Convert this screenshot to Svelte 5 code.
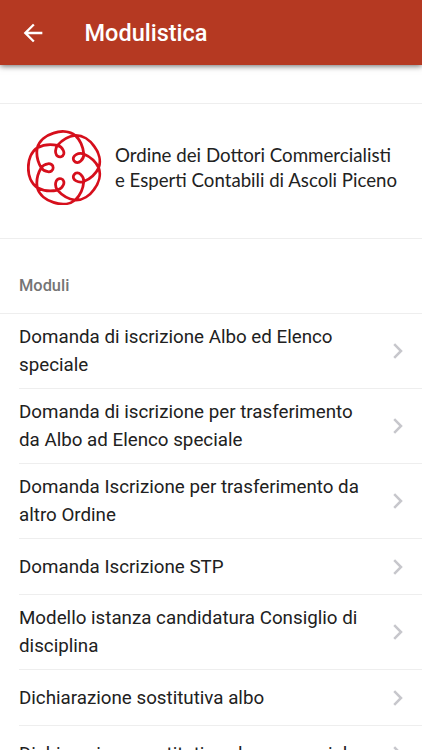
<script lang="ts">
  type Point = [number, number];

  const modules = [
    "Domanda di iscrizione Albo ed Elenco speciale",
    "Domanda di iscrizione per trasferimento da Albo ad Elenco speciale",
    "Domanda Iscrizione per trasferimento da altro Ordine",
    "Domanda Iscrizione STP",
    "Modello istanza candidatura Consiglio di disciplina",
    "Dichiarazione sostitutiva albo",
    "Dichiarazione sostitutiva elenco speciale",
  ];

  // Half a petal of the rosette: tip of the inner loop, the crossing,
  // the outer node and the top of the arc, with their bezier handles.
  const half: Point[] = [
    [35, 0],
    [35, -9], [43, -13], [51, -12],
    [60, -11], [67, -6], [71, 0],
    [80, 15], [87, 38], [83, 60],
    [77, 82], [56, 98], [34, 104.6],
  ];

  function place([x, y]: Point, deg: number, side: number): string {
    const a = (deg * Math.PI) / 180;
    const px = x * Math.cos(a) + side * y * Math.sin(a);
    const py = x * Math.sin(a) - side * y * Math.cos(a);
    return `${px.toFixed(1)} ${py.toFixed(1)}`;
  }

  function rosette(): string {
    let d = `M${place(half[0], 180, 1)}`;
    for (let i = 0; i < 5; i++) {
      const from = 180 - i * 144;
      const out = half.slice(1).map((p) => place(p, from, 1));
      const back = half.slice(0, -1).reverse().map((p) => place(p, from - 144, -1));
      d += ` C${[...out, ...back].join(" ")}`;
    }
    return d + "Z";
  }
</script>

<svelte:head><title>Modulistica</title></svelte:head>

<main>
  <header class="navbar">
    <button class="back" aria-label="Indietro">
      <svg viewBox="0 0 24 24" aria-hidden="true">
        <path d="M20 11H7.83l5.59-5.59L12 4l-8 8 8 8 1.41-1.41L7.83 13H20v-2z" />
      </svg>
    </button>
    <h1>Modulistica</h1>
  </header>

  <section class="brand">
    <svg class="emblem" viewBox="-114 -114 228 228" aria-hidden="true">
      <path d={rosette()} />
    </svg>
    <svg class="name" viewBox="0 0 290 60">
      <text x="0" y="23" textLength="276" lengthAdjust="spacingAndGlyphs">Ordine dei Dottori Commercialisti</text>
      <text x="0" y="47.5" textLength="282" lengthAdjust="spacingAndGlyphs">e Esperti Contabili di Ascoli Piceno</text>
    </svg>
  </section>

  <h2>Moduli</h2>
  <ul>
    {#each modules as title (title)}
      <li>
        <div class="row">
          <span class="title">{title}</span>
          <svg class="chevron" viewBox="0 0 10 16" aria-hidden="true">
            <path d="M1.2 1.2 8 8l-6.8 6.8" />
          </svg>
        </div>
      </li>
    {/each}
  </ul>
</main>

<style>
  :global(body) {
    background: #fff;
    overflow: hidden;
  }
  main {
    height: 750px;
    overflow: hidden;
    font-family: Roboto, "Liberation Sans", sans-serif;
    color: #212121;
  }
  .navbar {
    display: flex;
    align-items: center;
    height: 65px;
    background: #b53922;
    box-shadow: 0 1px 6px rgba(0, 0, 0, 0.6);
    color: #fff;
  }
  .back {
    display: flex;
    margin: 0;
    padding: 0 0 0 19px;
    border: 0;
    background: none;
  }
  .back svg {
    width: 28px;
    height: 28px;
    fill: #fff;
  }
  h1 {
    margin: 0 0 0 37.5px;
    font-size: 23.5px;
    font-weight: 500;
    line-height: 28px;
  }
  .brand {
    display: flex;
    align-items: center;
    box-sizing: border-box;
    height: 136px;
    margin-top: 38px;
    padding-left: 26.5px;
    border-top: 1px solid #eee;
    border-bottom: 1px solid #eee;
  }
  .emblem {
    width: 75.5px;
    height: 75.5px;
    margin-top: -7px;
  }
  .emblem path {
    fill: none;
    stroke: #d60f1c;
    stroke-width: 8.4;
  }
  .name {
    width: 290px;
    height: 60px;
    margin: -5px 0 0 13px;
  }
  .name text {
    font-family: Lato, "Open Sans", sans-serif;
    font-size: 18.7px;
    fill: #222;
  }
  h2 {
    margin: 0;
    padding: 32.5px 19px 14.5px;
    font-size: 16.4px;
    font-weight: 500;
    line-height: 27px;
    color: #757575;
  }
  ul {
    margin: 0;
    padding: 0;
    border-top: 1px solid #eee;
    list-style: none;
  }
  li {
    padding-left: 19px;
  }
  .row {
    display: flex;
    align-items: center;
    justify-content: space-between;
    box-sizing: border-box;
    min-height: 56.2px;
    padding: 9px 19px 9px 0;
    border-bottom: 1px solid #eee;
  }
  .title {
    width: 350px;
    font-size: 18.75px;
    line-height: 28px;
  }
  .chevron {
    flex: none;
    width: 10px;
    height: 16px;
  }
  .chevron path {
    fill: none;
    stroke: #c7c7cc;
    stroke-width: 2.5;
  }
</style>
